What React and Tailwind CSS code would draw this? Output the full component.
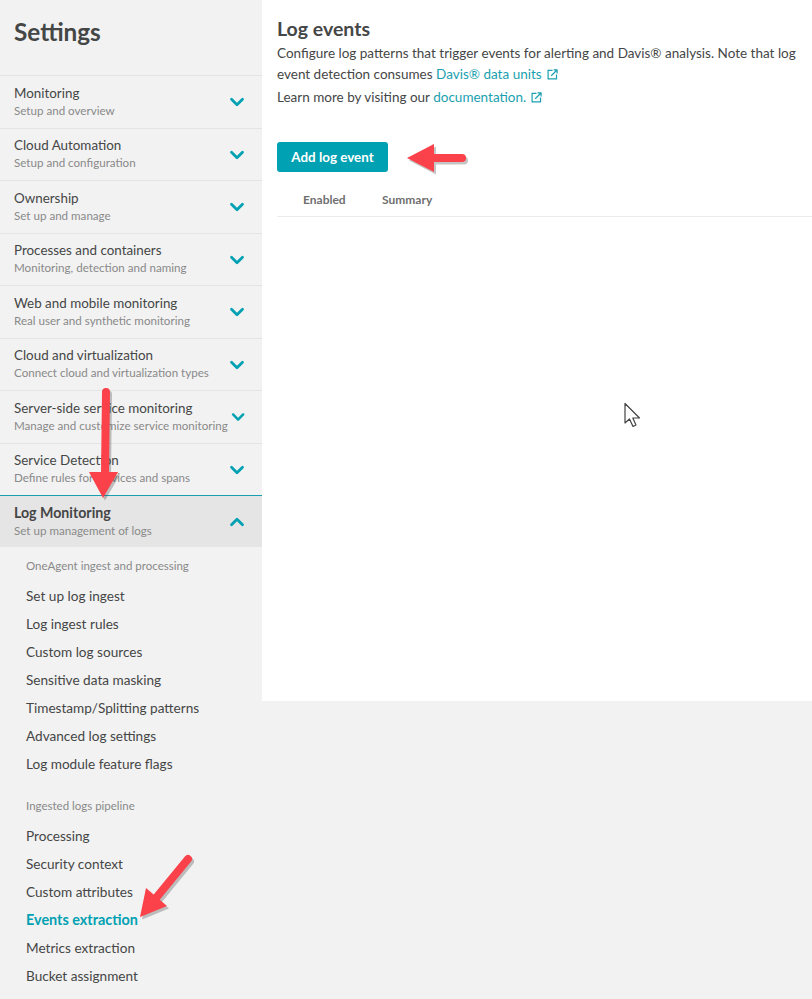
import { ChevronDown, ChevronUp } from 'lucide-react';

const sections = [
  { title: 'Monitoring', sub: 'Setup and overview' },
  { title: 'Cloud Automation', sub: 'Setup and configuration' },
  { title: 'Ownership', sub: 'Set up and manage' },
  { title: 'Processes and containers', sub: 'Monitoring, detection and naming' },
  { title: 'Web and mobile monitoring', sub: 'Real user and synthetic monitoring' },
  { title: 'Cloud and virtualization', sub: 'Connect cloud and virtualization types' },
  { title: 'Server-side service monitoring', sub: 'Manage and customize service monitoring' },
  { title: 'Service Detection', sub: 'Define rules for services and spans' },
];

const ingest = [
  'Set up log ingest',
  'Log ingest rules',
  'Custom log sources',
  'Sensitive data masking',
  'Timestamp/Splitting patterns',
  'Advanced log settings',
  'Log module feature flags',
];

const pipeline = ['Processing', 'Security context', 'Custom attributes', 'Events extraction', 'Metrics extraction', 'Bucket assignment'];

function ExternalIcon() {
  return (
    <svg viewBox="0 0 12 12" className="ml-[5px] inline-block h-[11px] w-[11px] align-[-1px]" fill="none" stroke="#1a9fb0" strokeWidth="1.3">
      <path d="M6 1.6H1.2v9.2h9.2V6" />
      <path d="M4.6 7.4 10.6 1.4M7.2 1h3.8v3.8" />
    </svg>
  );
}

function Arrow({ className, path, head, viewBox }) {
  return (
    <svg viewBox={viewBox} className={`pointer-events-none absolute ${className}`}>
      <g transform="translate(2 2.5)" opacity="0.28">
        <path d={path} fill="none" stroke="#333" strokeWidth="8" strokeLinecap="round" />
        <path d={head} fill="#333" />
      </g>
      <path d={path} fill="none" stroke="#fb4149" strokeWidth="8" strokeLinecap="round" />
      <path d={head} fill="#fb4149" />
    </svg>
  );
}

function SectionRow({ title, sub }) {
  return (
    <div className="flex h-[52.5px] items-center justify-between border-t border-[#e4e4e4] pl-[14px] pr-[14px]">
      <div className="whitespace-nowrap">
        <p className="text-[13.4px] leading-[18px] text-[#454646]">{title}</p>
        <p className="text-[11.6px] leading-[18px] text-[#898989]">{sub}</p>
      </div>
      <ChevronDown className="mt-[1px] h-[22px] w-[22px] text-[#00a1b2]" strokeWidth={3} />
    </div>
  );
}

function SubItem({ label }) {
  const active = label === 'Events extraction';
  return (
    <p className={`flex h-[28px] items-center ${active ? 'text-[14.4px] font-bold text-[#00a1b2]' : 'text-[13.6px] text-[#454646]'}`}>
      {label}
    </p>
  );
}

export default function App() {
  return (
    <div className="relative flex h-[999px] w-[812px] overflow-hidden bg-[#f2f2f2] font-['Lato','Noto_Sans',sans-serif]">
      <aside className="w-[262px] shrink-0">
        <div className="flex h-[75px] items-start pl-[14px] pt-[14px]">
          <h1 className="text-[24.3px] font-bold leading-[36px] text-[#454646]">Settings</h1>
        </div>
        {sections.map((s) => (
          <SectionRow key={s.title} title={s.title} sub={s.sub} />
        ))}
        <div className="flex h-[52px] items-center justify-between border-t border-[#1a9fb0] bg-[#e5e5e5] pl-[14px] pr-[14px]">
          <div className="whitespace-nowrap">
            <p className="text-[14.2px] font-bold leading-[18px] text-[#454646]">Log Monitoring</p>
            <p className="text-[11.6px] leading-[18px] text-[#898989]">Set up management of logs</p>
          </div>
          <ChevronUp className="h-[22px] w-[22px] text-[#00a1b2]" strokeWidth={3} />
        </div>
        <div className="pl-[26px] pt-[5px]">
          <p className="mb-[2px] flex h-[28px] items-center text-[11.5px] text-[#898989]">OneAgent ingest and processing</p>
          {ingest.map((label) => (
            <SubItem key={label} label={label} />
          ))}
          <p className="mb-[3px] mt-[15px] flex h-[26px] items-center text-[11.5px] text-[#898989]">Ingested logs pipeline</p>
          {pipeline.map((label) => (
            <SubItem key={label} label={label} />
          ))}
        </div>
      </aside>

      <main className="h-[701px] flex-1 bg-white pl-[15px]">
        <h2 className="mt-[17px] text-[19.5px] font-bold leading-[24px] text-[#454646]">Log events</h2>
        <p className="mt-[2px] text-[13.5px] leading-[21px] text-[#454646]">
          Configure log patterns that trigger events for alerting and Davis® analysis. Note that log event detection consumes{' '}
          <span className="text-[#1a9fb0]">Davis® data units</span>
          <ExternalIcon />
        </p>
        <p className="mt-[2px] text-[13.5px] leading-[21px] text-[#454646]">
          Learn more by visiting our <span className="text-[#1a9fb0]">documentation.</span>
          <ExternalIcon />
        </p>
        <button className="mt-[34px] h-[30px] w-[111px] rounded-[3px] bg-[#00a1b2] text-[13.4px] font-bold text-white">Add log event</button>
        <div className="mt-[11px] flex h-[34px] items-center border-b border-[#ececec] pl-[26px] text-[12px] font-bold text-[#6f6f6f]">
          <span className="w-[79px]">Enabled</span>
          <span>Summary</span>
        </div>
      </main>

      <Arrow viewBox="0 0 70 34" className="left-[404px] top-[142px] h-[34px] w-[70px]" path="M30 16H58" head="M3 16 30 2V30Z" />
      <Arrow viewBox="0 0 34 116" className="left-[89px] top-[386px] h-[116px] w-[34px]" path="M17 6 16 88" head="M0 86H29L14 112Z" />
      <Arrow viewBox="0 0 64 80" className="left-[136px] top-[852px] h-[80px] w-[64px]" path="M52 7 20 46" head="M4 65 10 36 31 54Z" />

      <svg viewBox="0 0 20 28" className="absolute left-[623px] top-[402px] h-[28px] w-[20px]">
        <path d="M2 1.5V21L6.5 17 10 24.5 13 23 9.8 16H16.5Z" fill="#fff" stroke="#444" strokeWidth="1.2" strokeLinejoin="round" />
      </svg>
    </div>
  );
}
